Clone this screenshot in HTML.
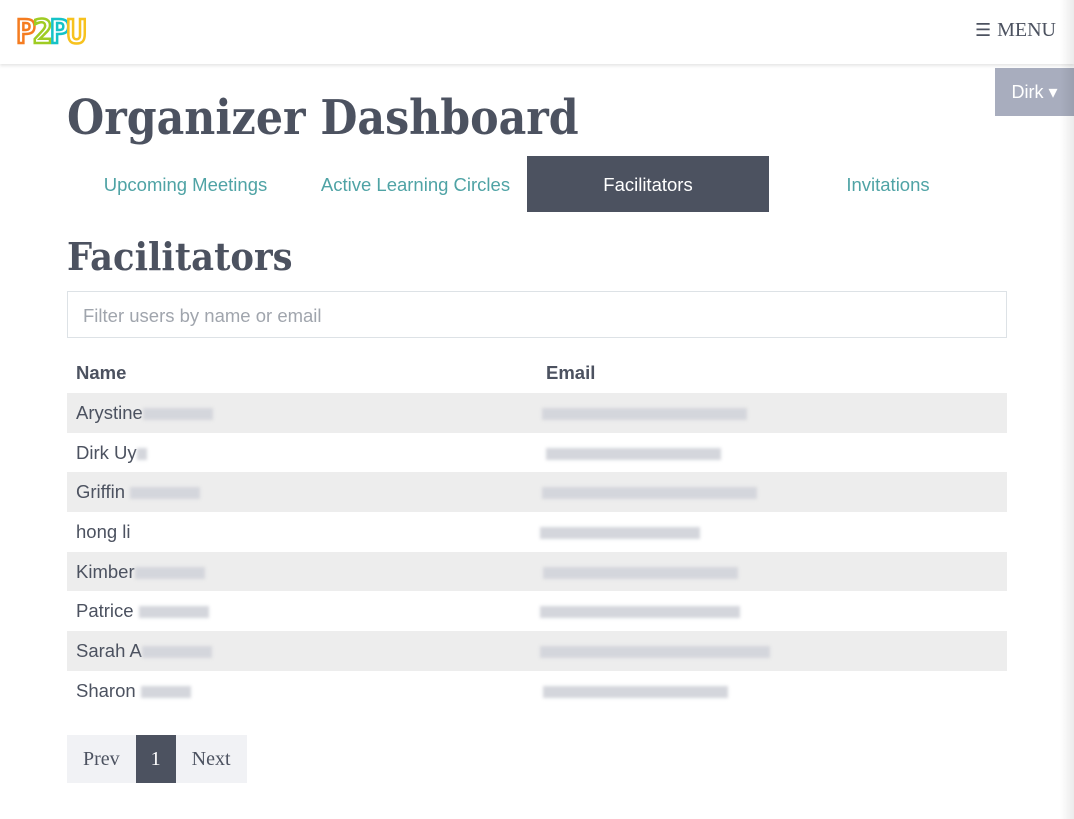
<!DOCTYPE html>
<html><head><meta charset="utf-8"><style>
body{margin:0;width:1074px;height:819px;background:#fff;font-family:"Liberation Sans",sans-serif;color:#4c5260;position:relative;overflow:hidden}
.top{height:64px;box-shadow:0 2px 3px rgba(0,0,0,.1);position:relative}
.logo{position:absolute;left:16px;top:12px;font:bold 33px "DejaVu Sans Mono",monospace;letter-spacing:-3px}
.logo span{color:#fff;-webkit-text-stroke:2.5px}
.menu{position:absolute;right:18px;top:19px;font:20px "Liberation Serif",serif;color:#4c5260}
.menu b{font-family:"DejaVu Sans",sans-serif;font-size:18px;margin-right:6px}
.dirk{position:absolute;left:995px;top:68px;width:79px;height:48px;background:#a8adbe;color:#fff;font-size:18px;line-height:48px;text-align:center}
.edge{position:absolute;right:0;top:0;width:14px;height:819px;background:linear-gradient(90deg,rgba(0,0,0,0),rgba(0,0,0,.08))}
h1{position:absolute;left:67px;top:90px;margin:0;font:bold 48px "DejaVu Serif",serif;color:#4c5260;transform:scaleX(.89);transform-origin:left}
h2{position:absolute;left:67px;top:234px;margin:0;font:bold 38px "DejaVu Serif",serif;color:#4c5260;transform:scaleX(.93);transform-origin:left}
.tabs{position:absolute;left:67px;top:156px;width:940px;height:56px;display:flex}
.tabs div{height:56px;line-height:57px;text-align:center;color:#4fa3a5;font-size:18.5px}
.tabs .a{background:#4c5260;color:#fff}
.filter{position:absolute;left:67px;top:291px;width:938px;height:45px;border:1px solid #dde2e6;font-size:18.5px;color:#a0a5ad;line-height:47px;text-indent:15px}
table{position:absolute;left:67px;top:353px;width:940px;border-collapse:collapse;font-size:18.5px}
th{text-align:left;font-weight:bold;height:40px;padding:0 9px}
td{height:39.7px;padding:0 9px;position:relative}
tr:nth-child(even) td{background:#ededed}
.b{display:inline-block;height:12px;background:#d4d6dc;vertical-align:middle;filter:blur(1.5px)}
.pag{position:absolute;left:67px;top:735px;height:48px;display:flex;font:20px "Liberation Serif",serif}
.pag div{background:#f1f2f5;line-height:48px;padding:0 16px}
.pag .c{background:#4c5260;color:#fff;padding:0 15px}
</style></head><body>
<div class="top"><div class="logo"><span style="-webkit-text-stroke-color:#f57c20">P</span><span style="-webkit-text-stroke-color:#9fcc23">2</span><span style="-webkit-text-stroke-color:#15c3c7">P</span><span style="-webkit-text-stroke-color:#f7c21e">U</span></div>
<div class="menu"><b>☰</b>MENU</div></div>
<div class="dirk">Dirk ▾</div>
<h1>Organizer Dashboard</h1>
<div class="tabs"><div style="width:237px">Upcoming Meetings</div><div style="width:223px">Active Learning Circles</div><div class="a" style="width:242px">Facilitators</div><div style="width:238px">Invitations</div></div>
<h2>Facilitators</h2>
<div class="filter">Filter users by name or email</div>
<table>
<tr><th style="width:452px">Name</th><th>Email</th></tr>
<tr><td>Arystine<span class="b" style="width:70px"></span></td><td><span class="b" style="width:205px;margin-left:-4px"></span></td></tr>
<tr><td>Dirk Uy<span class="b" style="width:10px"></span></td><td><span class="b" style="width:175px"></span></td></tr>
<tr><td>Griffin <span class="b" style="width:70px"></span></td><td><span class="b" style="width:215px;margin-left:-4px"></span></td></tr>
<tr><td>hong li</td><td><span class="b" style="width:160px;margin-left:-6px"></span></td></tr>
<tr><td>Kimber<span class="b" style="width:70px"></span></td><td><span class="b" style="width:195px;margin-left:-3px"></span></td></tr>
<tr><td>Patrice <span class="b" style="width:70px"></span></td><td><span class="b" style="width:200px;margin-left:-6px"></span></td></tr>
<tr><td>Sarah A<span class="b" style="width:70px"></span></td><td><span class="b" style="width:230px;margin-left:-6px"></span></td></tr>
<tr><td>Sharon <span class="b" style="width:50px"></span></td><td><span class="b" style="width:185px;margin-left:-3px"></span></td></tr>
</table>
<div class="pag"><div>Prev</div><div class="c">1</div><div>Next</div></div>
<div class="edge"></div>
</body></html>
